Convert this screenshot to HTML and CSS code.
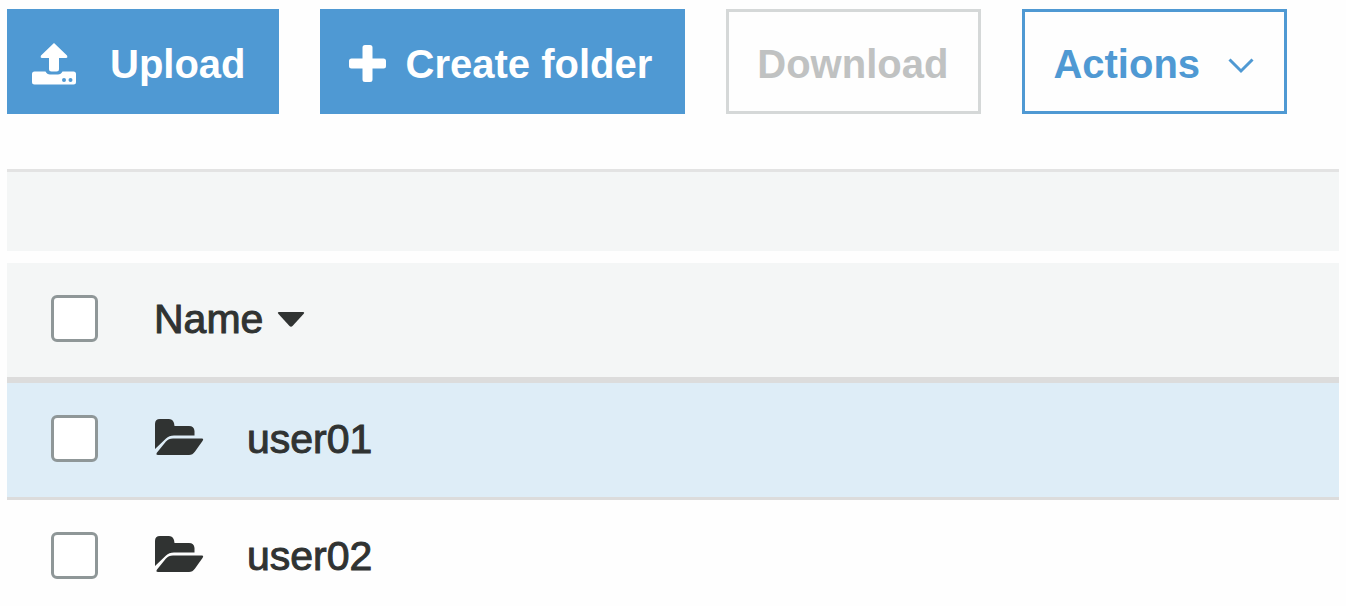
FILE: index.html
```html
<!DOCTYPE html>
<html lang="en">
<head>
<meta charset="utf-8">
<meta name="viewport" content="width=device-width, initial-scale=1">
<title>Files</title>
<link rel="stylesheet" href="styles.css">
</head>
<body>
<svg class="sprite" aria-hidden="true">
  <symbol id="folder-open" viewBox="0 0 50 38">
    <path d="M1 31V6Q1 1 6 1H15Q20 1 20.500 8H35Q40 8 40.500 13V17.500H20Q15 17.500 12 20.500Z"/>
    <path d="M19 20.500H48Q50 20.500 48.500 23L41 33.500Q38.500 37 35 37H4Q1.500 37 3 34.500L12 23.500Q14.500 20.500 19 20.500Z"/>
  </symbol>
</svg>
<main class="browser">
  <div class="toolbar">
    <button class="btn btn-primary btn-upload" type="button">
      <svg class="icon-upload" viewBox="0 0 44 42" aria-hidden="true">
        <path d="M22 0 35 12.500Q36 15 34 15H27V26Q27 28.500 24.500 28.500H19.500Q17 28.500 17 26V15H10Q8 15 9 12.500Z"/>
        <path fill-rule="evenodd" d="M2.500 28.500H13.500Q15 31.500 18 31.500H26Q29 31.500 30.500 28.500H41.500Q44 28.500 44 31V39Q44 41.500 41.500 41.500H2.500Q0 41.500 0 39V31Q0 28.500 2.500 28.500ZM30 37a2 2 0 1 0 4 0a2 2 0 1 0-4 0ZM36.500 37a2 2 0 1 0 4 0a2 2 0 1 0-4 0Z"/>
      </svg>
      Upload
    </button>
    <button class="btn btn-primary btn-create" type="button">
      <svg class="icon-plus" viewBox="0 0 37 37" aria-hidden="true">
        <path d="M16 0H21Q23.500 0 23.500 2.500V13.500H34.500Q37 13.500 37 16V21Q37 23.500 34.500 23.500H23.500V34.500Q23.500 37 21 37H16Q13.500 37 13.500 34.500V23.500H2.500Q0 23.500 0 21V16Q0 13.500 2.500 13.500H13.500V2.500Q13.500 0 16 0Z"/>
      </svg>
      Create folder
    </button>
    <button class="btn btn-disabled" type="button" disabled>Download</button>
    <button class="btn btn-outline" type="button">
      Actions
      <svg class="icon-chevron" viewBox="0 0 26 16" aria-hidden="true">
        <path d="M1.500 1.500 13 13 24.500 1.500"/>
      </svg>
    </button>
  </div>
  <div class="band"></div>
  <table class="files">
    <thead>
      <tr>
        <th class="cell-check" scope="col"><input class="check" type="checkbox" aria-label="Select all"></th>
        <th scope="col">
          <div class="entry entry-head">Name
            <svg class="icon-sort" viewBox="0 0 28 17" aria-hidden="true"><path d="M2 1H26Q28 1 26.500 3L15.500 15Q14 16.500 12.500 15L1.500 3Q0 1 2 1Z"/></svg>
          </div>
        </th>
      </tr>
    </thead>
    <tbody>
      <tr class="row-active">
        <td class="cell-check"><input class="check" type="checkbox" aria-label="Select user01"></td>
        <td><div class="entry"><svg class="icon-folder" aria-hidden="true"><use href="#folder-open"/></svg>user01</div></td>
      </tr>
      <tr>
        <td class="cell-check"><input class="check" type="checkbox" aria-label="Select user02"></td>
        <td><div class="entry"><svg class="icon-folder" aria-hidden="true"><use href="#folder-open"/></svg>user02</div></td>
      </tr>
    </tbody>
  </table>
</main>
</body>
</html>
```
FILE: styles.css
```css
* {
  box-sizing: border-box;
}

body {
  margin: 0;
  background: #fefefe;
  color: #303332;
  font-family: "Liberation Sans", Arial, sans-serif;
}

.sprite {
  position: absolute;
  width: 0;
  height: 0;
}

.browser {
  padding: 9px 7px 0;
}

.toolbar {
  display: flex;
  gap: 41px;
}

.btn {
  display: flex;
  align-items: center;
  height: 105px;
  padding: 4px 30px 0 28px;
  border: 3px solid;
  border-radius: 0;
  background: transparent;
  font: bold 40px/48px "Liberation Sans", Arial, sans-serif;
  white-space: nowrap;
}

.btn svg {
  fill: currentColor;
}

.btn-primary {
  border-color: #4f99d3;
  background: #4f99d3;
  color: #fff;
}

.btn-upload {
  gap: 34px;
  padding-left: 22px;
}

.btn-create {
  gap: 20px;
  padding-left: 26px;
}

.btn-outline {
  gap: 28px;
  border-color: #4f99d3;
  color: #4f99d3;
}

.btn-disabled {
  border-color: #d5d8d8;
  color: #c0c2c2;
}

.icon-upload {
  width: 44px;
  height: 42px;
}

.icon-plus {
  width: 37px;
  height: 37px;
}

.btn .icon-chevron {
  width: 26px;
  height: 16px;
  margin-top: 4px;
  fill: none;
  stroke: currentColor;
  stroke-width: 3;
}

.band {
  height: 82px;
  margin: 55px 0 12px;
  border-top: 3px solid #e3e3e3;
  background: #f4f6f6;
}

.files {
  width: 100%;
  border-collapse: separate;
  border-spacing: 0;
  font-size: 41px;
  line-height: 48px;
}

.files th,
.files td {
  padding: 32px 0 34px;
  font-weight: 400;
  text-align: left;
  vertical-align: top;
  -webkit-text-stroke: 1px currentColor;
}

.files th {
  border-bottom: 6px solid #dcdcdc;
  background: #f4f6f6;
}

.files .row-active td {
  border-bottom: 3px solid #dcdcdc;
  background: #deedf7;
}

.files tbody tr:last-child td {
  padding-bottom: 24px;
}

.files .cell-check {
  width: 147px;
  padding-left: 44px;
}

.check {
  display: block;
  width: 47px;
  height: 47px;
  margin: 0;
  border: 3px solid #8f9798;
  border-radius: 6px;
  background: #fff;
  appearance: none;
}

.check:checked {
  background: #4f99d3;
}

.entry {
  display: flex;
  align-items: center;
  gap: 43px;
}

.entry-head {
  gap: 14px;
}

.entry svg {
  fill: currentColor;
}

.icon-folder {
  width: 50px;
  height: 38px;
  margin-bottom: 4px;
}

.icon-sort {
  width: 28px;
  height: 17px;
}
```
